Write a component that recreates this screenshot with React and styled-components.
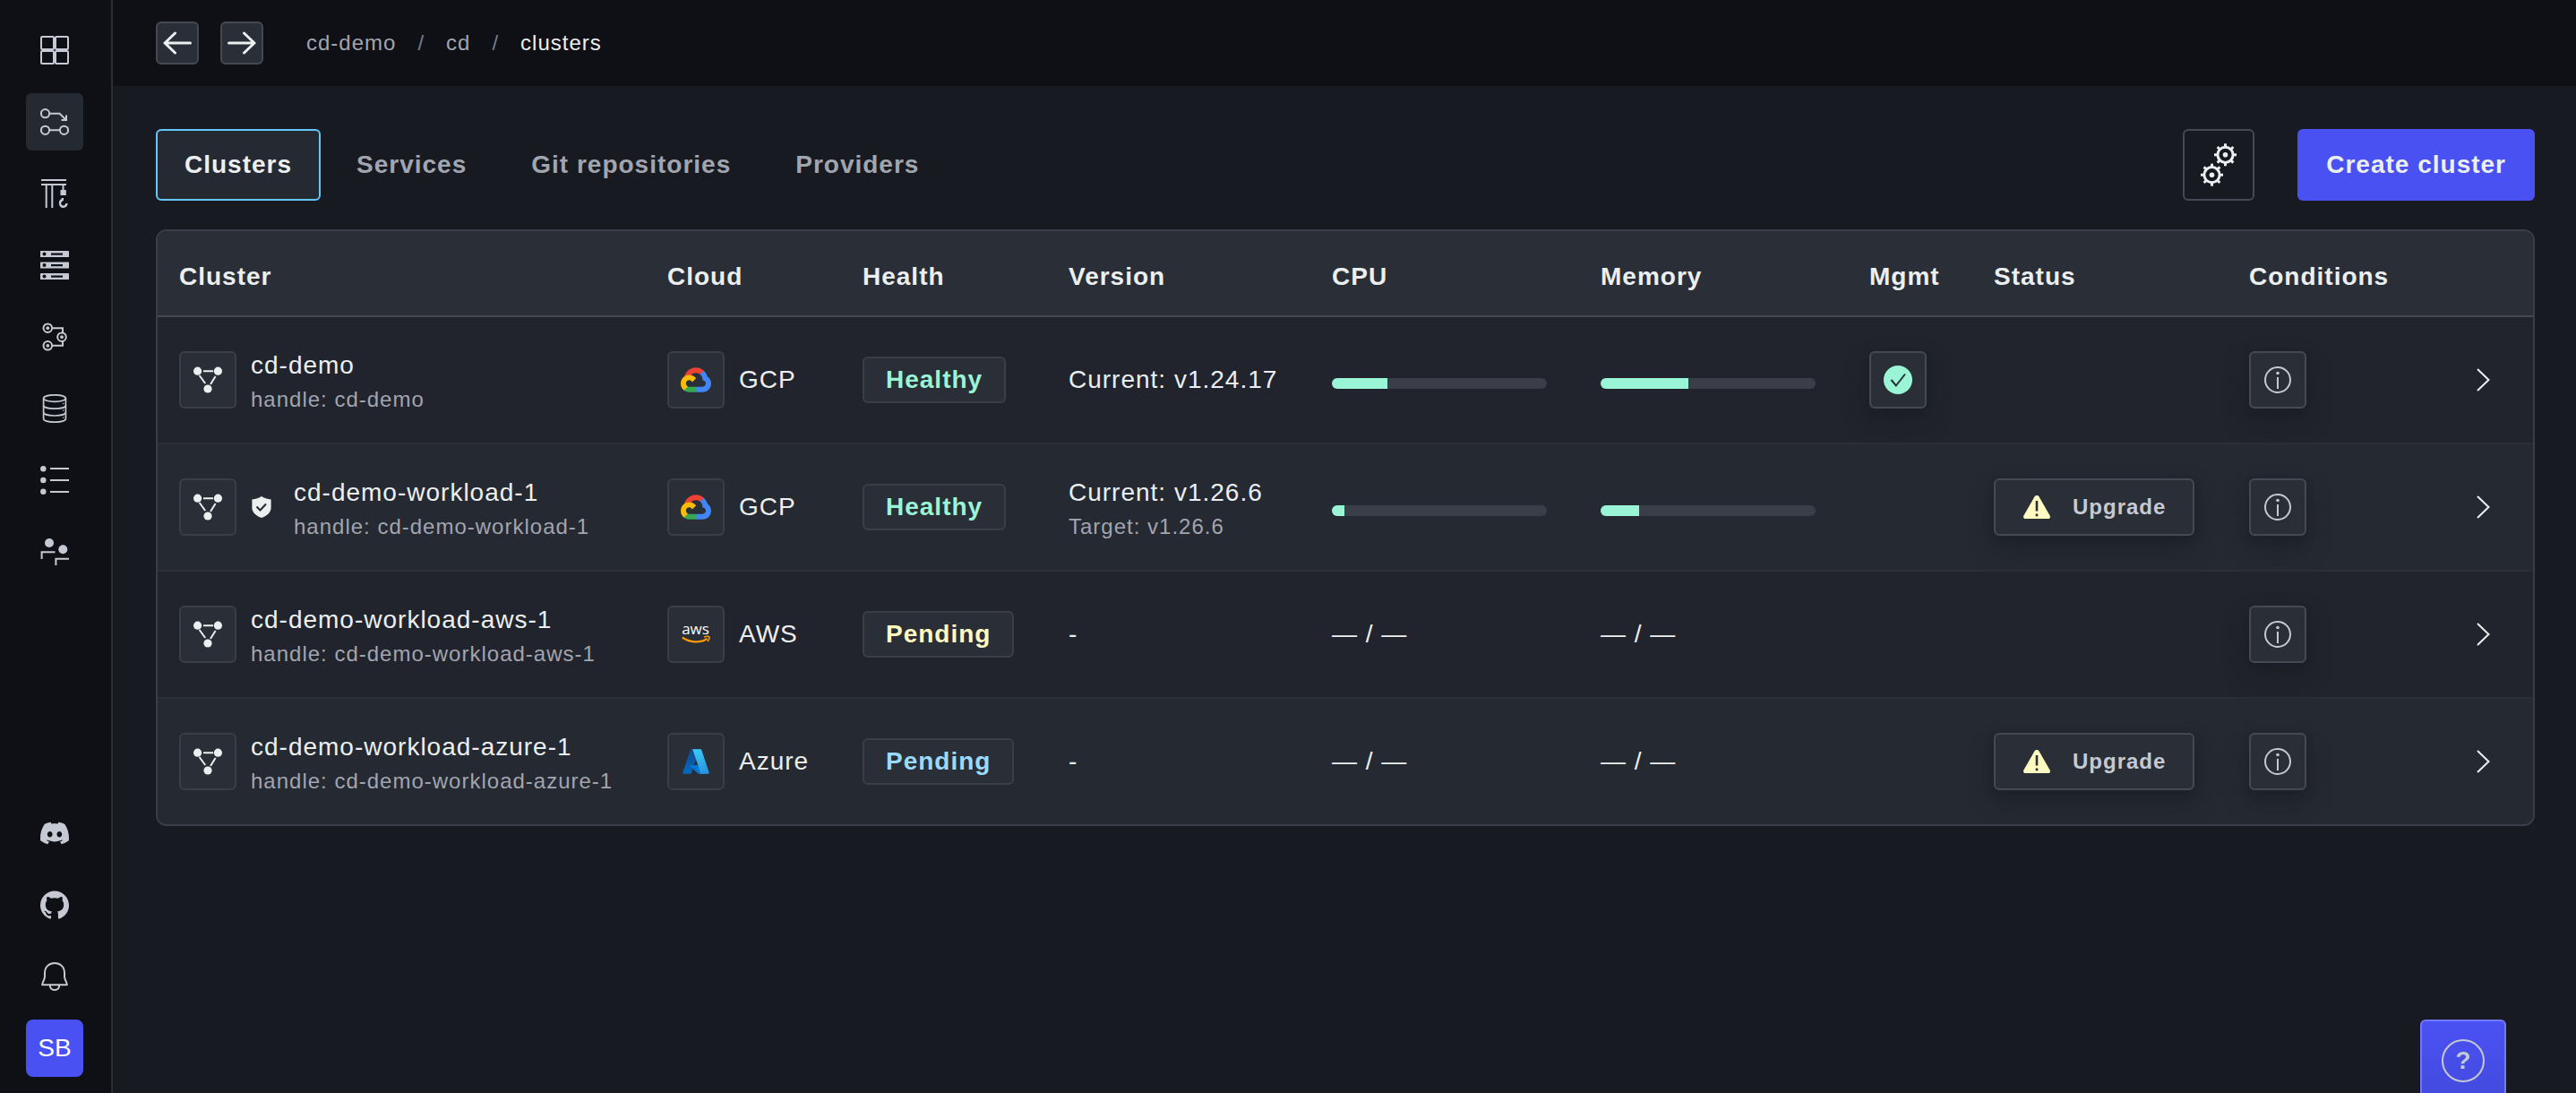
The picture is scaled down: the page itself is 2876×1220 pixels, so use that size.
import React from 'react';
import styled, { createGlobalStyle, css } from 'styled-components';
import { SiDiscord, SiGithub } from 'react-icons/si';

const color = {
  shell: '#0e1015',
  page: '#171a21',
  rowOdd: '#21242c',
  rowEven: '#252932',
  raised: '#2a2e37',
  line: '#2a2e37',
  border: '#3a3e48',
  borderStrong: '#454954',
  text: '#ebeff0',
  textLight: '#c5c9d3',
  textMuted: '#a1a5b0',
  primary: '#4a51f2',
  primaryBorder: '#747af6',
  focus: '#66c7ff',
  success: '#99f5d5',
  warning: '#fff9c2',
  info: '#99daff',
};

const GlobalStyle = createGlobalStyle`
  *, *::before, *::after { box-sizing: border-box; }
  body {
    margin: 0;
    background: ${color.page};
    color: ${color.text};
    font-family: "Liberation Sans", Arial, Helvetica, sans-serif;
    font-size: 28px;
    line-height: 32px;
    letter-spacing: 1px;
  }
  button { font: inherit; letter-spacing: inherit; color: inherit; cursor: pointer; }
  a { color: inherit; text-decoration: none; }
  svg { display: block; flex: none; }
`;

/* ---------- layout ---------- */

const Shell = styled.div`
  display: flex;
  min-height: 100vh;
`;

const Sidebar = styled.nav`
  position: sticky;
  top: 0;
  flex: none;
  display: flex;
  flex-direction: column;
  justify-content: space-between;
  width: 126px;
  height: 100vh;
  padding: 24px 30px 18px 29px;
  background: ${color.shell};
  border-right: 2px solid ${color.raised};
  color: ${color.textLight};
`;

const SideGroup = styled.div`
  display: flex;
  flex-direction: column;
  gap: 16px;
`;

const SideLink = styled.a`
  display: flex;
  align-items: center;
  justify-content: center;
  width: 64px;
  height: 64px;
  border-radius: 6px;
  background: ${(p) => (p.$active ? color.rowEven : 'transparent')};
`;

const Avatar = styled.button`
  width: 64px;
  height: 64px;
  padding: 0;
  border: 0;
  border-radius: 8px;
  background: ${color.primary};
  color: #fff;
  letter-spacing: 0;
`;

const Content = styled.div`
  flex: 1;
  min-width: 0;
`;

const TopBar = styled.header`
  display: flex;
  align-items: center;
  gap: 48px;
  height: 96px;
  padding: 0 48px;
  background: ${color.shell};
`;

const NavButtons = styled.div`
  display: flex;
  gap: 24px;
`;

const floating = css`
  background: ${color.raised};
  border: 2px solid ${color.borderStrong};
  border-radius: 6px;
  box-shadow: 0 4px 8px rgba(23, 26, 33, 0.3), 0 14px 28px rgba(23, 26, 33, 0.4);
`;

const IconButton = styled.button`
  ${floating}
  display: flex;
  align-items: center;
  justify-content: center;
  width: ${(p) => p.$size}px;
  height: ${(p) => p.$size}px;
  padding: 0;
  color: ${(p) => (p.$bright ? color.text : color.textLight)};
  ${(p) => p.$bright && css`box-shadow: none;`}
`;

const Crumbs = styled.ol`
  display: flex;
  gap: 24px;
  margin: 0;
  padding: 0;
  list-style: none;
  font-size: 24px;
  color: ${color.textMuted};

  li + li::before {
    content: '/';
    color: #747b8b;
  }
`;

const Crumb = styled.li`
  display: flex;
  gap: 24px;
  color: ${(p) => (p.$current ? color.text : 'inherit')};
`;

const Main = styled.main`
  display: flex;
  flex-direction: column;
  gap: 32px;
  padding: 48px 46px 48px 48px;
`;

const Toolbar = styled.div`
  display: flex;
  align-items: center;
  justify-content: space-between;
`;

const Tabs = styled.nav`
  display: flex;
  gap: 8px;
`;

const Tab = styled.a`
  display: flex;
  align-items: center;
  height: 80px;
  padding: 0 30px;
  border: 2px solid ${(p) => (p.$active ? color.focus : 'transparent')};
  border-radius: 6px;
  background: ${(p) => (p.$active ? color.rowEven : 'transparent')};
  color: ${(p) => (p.$active ? color.text : color.textMuted)};
  font-weight: 700;
`;

const Actions = styled.div`
  display: flex;
  gap: 48px;
`;

const SettingsButton = styled.button`
  display: flex;
  align-items: center;
  justify-content: center;
  width: 80px;
  height: 80px;
  padding: 0;
  background: transparent;
  border: 2px solid ${color.borderStrong};
  border-radius: 6px;
`;

const PrimaryButton = styled.button`
  height: 80px;
  padding: 0 32px;
  background: ${color.primary};
  border: 0;
  border-radius: 6px;
  && { font-weight: 700; }
`;

/* ---------- table ---------- */

const TableFrame = styled.div`
  overflow: hidden;
  border: 2px solid ${color.border};
  border-radius: 12px;
`;

const Table = styled.table`
  width: 100%;
  table-layout: fixed;
  border-collapse: separate;
  border-spacing: 0;
`;

const Col = styled.col`
  width: ${(p) => (p.$width ? `${p.$width}px` : 'auto')};
`;

const Th = styled.th`
  height: 96px;
  padding: 8px 0 0 24px;
  background: ${color.raised};
  border-bottom: 2px solid ${color.borderStrong};
  text-align: left;
  font-weight: 700;
`;

const Td = styled.td`
  height: 142px;
  padding: 0 0 0 24px;
  vertical-align: middle;
  white-space: nowrap;
  border-bottom: 2px solid ${color.line};
`;

const Row = styled.tr`
  background: ${color.rowOdd};
  &:nth-child(even) { background: ${color.rowEven}; }
  &:last-child ${Td} {
    height: 140px;
    border-bottom: 0;
  }
`;

const Inline = styled.div`
  display: flex;
  align-items: center;
  gap: 16px;
`;

const Tile = styled.span`
  flex: none;
  display: flex;
  align-items: center;
  justify-content: center;
  width: 64px;
  height: 64px;
  background: ${color.raised};
  border: 2px solid ${color.border};
  border-radius: 6px;
`;

const Protected = styled.span`
  width: 32px;
`;

const Stack = styled.div`
  display: flex;
  flex-direction: column;
`;

const Primary = styled.span`
  line-height: 44px;
`;

const Secondary = styled.span`
  font-size: 24px;
  color: ${color.textMuted};
`;

const Chip = styled.span`
  display: inline-flex;
  align-items: center;
  height: 52px;
  padding: 0 24px;
  background: ${color.raised};
  border: 2px solid ${color.border};
  border-radius: 6px;
  color: ${(p) => color[p.$tone]};
  font-weight: 700;
`;

const Meter = styled.div`
  width: 240px;
  height: 12px;
  margin-top: 8px;
  overflow: hidden;
  border-radius: 6px;
  background: ${color.border};
`;

const MeterFill = styled.div`
  height: 100%;
  background: ${color.success};
`;

const UpgradeButton = styled.button`
  ${floating}
  display: flex;
  align-items: center;
  gap: 24px;
  height: 64px;
  padding: 0 30px;
  && {
    font-size: 24px;
    font-weight: 700;
    color: ${color.textLight};
  }
`;

const RowLink = styled.a`
  display: flex;
  justify-content: center;
`;

const HelpButton = styled.button`
  position: fixed;
  right: 78px;
  bottom: 0;
  display: flex;
  justify-content: center;
  width: 96px;
  height: 82px;
  padding: 20px 0 0;
  border: 2px solid ${color.primaryBorder};
  border-bottom: 0;
  border-radius: 6px 6px 0 0;
  background: linear-gradient(#4a51f2, #444bdf);
`;

const HelpMark = styled.span`
  width: 48px;
  height: 48px;
  border: 2px solid ${color.textLight};
  border-radius: 50%;
  color: ${color.textLight};
  font-weight: 700;
  line-height: 44px;
  letter-spacing: 0;
`;

/* ---------- icons ---------- */

const Icon = ({ size = 32, stroke = 2, children }) => (
  <svg
    width={size}
    height={size}
    viewBox={`0 0 ${size} ${size}`}
    fill="none"
    stroke="currentColor"
    strokeWidth={stroke}
    aria-hidden="true"
  >
    {children}
  </svg>
);

const HomeIcon = () => (
  <Icon>
    <rect x="1" y="1" width="14" height="14" rx="1" />
    <rect x="17" y="1" width="14" height="14" rx="1" />
    <rect x="1" y="17" width="14" height="14" rx="1" />
    <rect x="17" y="17" width="14" height="14" rx="1" />
  </Icon>
);

const DeployIcon = () => (
  <Icon>
    <circle cx="5.5" cy="6.7" r="4.6" />
    <circle cx="5.5" cy="25.3" r="4.6" />
    <circle cx="26.5" cy="25.3" r="4.6" />
    <path d="M10 6.7H21.5L29 14M29 8.5V14H23.5M10 25.3H22" />
  </Icon>
);

const CraneIcon = () => (
  <Icon>
    <path d="M1 1H29M1 6H29M6.7 6V32M13.3 6V32M25.5 6V13" />
    <path d="M22.5 12H28.8V18H22.5Z" fill="currentColor" stroke="none" />
    <path d="M24.8 21V23C22.4 23.8 21.8 26 22.2 28C23.2 32 29.2 31.5 29.4 27" strokeWidth="2.4" />
  </Icon>
);

const ServersIcon = () => (
  <Icon>
    {[0, 12.5, 25].map((y) => (
      <g key={y} stroke="none">
        <rect y={y} width="32" height="7" rx="0.5" fill="currentColor" />
        <circle cx="4.5" cy={y + 3.5} r="2" fill={color.shell} />
        <rect x="12" y={y + 2.5} width="13" height="2.2" fill={color.shell} />
      </g>
    ))}
  </Icon>
);

const PipelineIcon = () => (
  <Icon>
    {[[8.3, 6.2], [24, 16.2], [8.3, 25.8]].map(([x, y]) => (
      <g key={y}>
        <circle cx={x} cy={y} r="4.8" />
        <circle cx={x} cy={y} r="1.9" fill="currentColor" stroke="none" />
      </g>
    ))}
    <path d="M13.3 6.2H25V11.5M13.3 25.8H25V21" />
  </Icon>
);

const DatabaseIcon = () => (
  <Icon stroke={1.7}>
    <ellipse cx="16" cy="4.6" rx="12.4" ry="3.8" />
    <path d="M3.6 4.6V27.4C3.6 29.5 9 31.2 16 31.2S28.4 29.5 28.4 27.4V4.6" />
    <path d="M3.6 12.5C3.6 14.6 9 16.2 16 16.2S28.4 14.6 28.4 12.5M3.6 20.2C3.6 22.4 9 24 16 24S28.4 22.4 28.4 20.2" />
    <g fill="currentColor" stroke="none">
      <circle cx="25.6" cy="10.5" r="0.8" />
      <circle cx="25.6" cy="18" r="0.8" />
      <circle cx="25.6" cy="26" r="0.8" />
    </g>
  </Icon>
);

const ListIcon = () => (
  <Icon>
    <path d="M11 3H32M11 16H32M11 29H32" />
    <g fill="currentColor" stroke="none">
      <circle cx="3.3" cy="3.2" r="3.2" />
      <circle cx="3.3" cy="16" r="3.2" />
      <circle cx="3.3" cy="28.8" r="3.2" />
    </g>
  </Icon>
);

const PeopleIcon = () => (
  <Icon>
    <path d="M1.6 24V16.2H16.5M17.4 31V23.8H32" />
    <g fill="currentColor" stroke="none">
      <circle cx="10" cy="6" r="5" />
      <circle cx="25.3" cy="13.3" r="5" />
    </g>
  </Icon>
);

const BellIcon = () => (
  <Icon>
    <path
      d="M2 25.2C1.6 24.6 5 19 5 16V12C5 5 10 1 16 1S27 5 27 12V16C27 19 30.4 24.6 30 25.2Z"
      strokeLinejoin="round"
    />
    <path d="M10.8 25.5C10.8 29 13 31 16 31S21.2 29 21.2 25.5" />
  </Icon>
);

const ArrowLeftIcon = () => (
  <Icon stroke={3}>
    <path d="M30.5 16H2M13.5 5L2 16L13.5 27" strokeLinecap="round" strokeLinejoin="round" />
  </Icon>
);

const ArrowRightIcon = () => (
  <Icon stroke={3}>
    <path d="M1.5 16H30M18.5 5L30 16L18.5 27" strokeLinecap="round" strokeLinejoin="round" />
  </Icon>
);

const Gear = ({ x, y }) => (
  <g transform={`translate(${x} ${y})`}>
    <circle r="8.6" strokeWidth="3" />
    <circle r="2.8" fill="currentColor" stroke="none" />
    {[0, 45, 90, 135, 180, 225, 270, 315].map((angle) => (
      <path key={angle} d="M0 -9V-12.5" strokeWidth="3" transform={`rotate(${angle})`} />
    ))}
  </g>
);

const GearsIcon = () => (
  <Icon size={48}>
    <Gear x={31.5} y={12.8} />
    <Gear x={16.5} y={35.2} />
  </Icon>
);

const ClusterIcon = () => (
  <Icon>
    <path d="M11 6.2H22M6.6 11L13.2 20M24.6 12L19 21" />
    <g fill="currentColor" stroke="none">
      <circle cx="4.6" cy="6.2" r="4.6" />
      <circle cx="27.4" cy="6.2" r="4.6" />
      <circle cx="16" cy="26" r="4.6" />
    </g>
  </Icon>
);

const ShieldIcon = () => (
  <Icon size={24}>
    <path
      d="M12 0C14.5 1.6 18.5 3 22.6 3.4V13C22.6 18 17.5 22 12 24C6.5 22 1.4 18 1.4 13V3.4C5.5 3 9.5 1.6 12 0Z"
      fill="currentColor"
      stroke="none"
    />
    <path d="M6.5 11.5L10.5 15.5L17 8.5" stroke={color.rowEven} />
  </Icon>
);

const CheckIcon = () => (
  <Icon>
    <circle cx="16" cy="16" r="16" fill={color.success} stroke="none" />
    <path d="M8.5 16L13.8 22.5L24 9.5" stroke={color.raised} />
  </Icon>
);

const WarningIcon = () => (
  <Icon>
    <path
      d="M13.6 4.2C14.6 2.5 17.4 2.5 18.4 4.2L30.6 25.5C31.6 27.4 30.6 29 28.6 29H3.4C1.4 29 0.4 27.4 1.4 25.5Z"
      fill={color.warning}
      stroke="none"
    />
    <path d="M16 9V20.5M16 23.5V26.2" stroke={color.raised} strokeWidth="2.6" />
  </Icon>
);

const InfoIcon = () => (
  <Icon>
    <circle cx="16" cy="16" r="14" />
    <circle cx="16" cy="8.5" r="1.8" fill="currentColor" stroke="none" />
    <path d="M16 13V26" />
  </Icon>
);

const ChevronIcon = () => (
  <Icon>
    <path d="M10 4L22.5 16L10 28" />
  </Icon>
);

const GcpLogo = () => (
  <svg width="34" height="28" viewBox="0 0 256 206" aria-hidden="true">
    <path fill="#EA4335" d="M170.25 56.82L192.5 34.57L193.99 25.2C153.44 -11.68 88.98 -7.5 52.42 33.92C42.27 45.42 34.73 59.76 30.72 74.57L38.69 73.45L83.19 66.11L86.63 62.6C106.42 40.85 139.9 37.93 162.76 56.43Z" />
    <path fill="#4285F4" d="M224.2 73.92C219.09 55.08 208.59 38.15 193.99 25.2L162.76 56.43C175.94 67.2 183.46 83.44 183.13 100.47V106.01C198.49 106.01 210.93 118.45 210.93 133.81C210.93 149.16 198.49 161.29 183.13 161.29H127.46L122 167.22V200.56L127.46 205.8H183.13C223.06 206.11 255.69 174.3 256 134.37C256.19 110.17 244.25 87.48 224.2 73.92Z" />
    <path fill="#34A853" d="M71.87 205.8H127.46V161.29H71.87C67.91 161.29 64.07 160.44 60.47 158.79L52.58 161.21L30.18 183.46L28.22 191.04C40.79 200.53 56.12 205.86 71.87 205.8Z" />
    <path fill="#FBBC05" d="M71.87 61.43C31.94 61.66 -0.24 94.23 0 134.16C0.13 156.46 10.55 177.45 28.22 191.04L60.47 158.79C46.48 152.47 40.26 136.01 46.58 122.02C52.9 108.03 69.37 101.81 83.36 108.13C89.52 110.91 94.46 115.85 97.25 122.02L129.49 89.77C115.77 71.83 94.45 61.34 71.87 61.43Z" />
  </svg>
);

const AwsLogo = () => (
  <svg width="36" height="36" viewBox="-2 -3 36 36" role="img" aria-label="aws">
    <text x="15.5" y="15" textAnchor="middle" fontFamily="'Open Sans', sans-serif" fontSize="17" letterSpacing="0" fill="#fff">
      aws
    </text>
    <g fill="none" stroke="#ff9900">
      <path d="M0.8 18.5C9 24.6 21 24.8 28.5 20" strokeWidth="2.2" />
      <path d="M25 18C28 17.2 30 17.2 30.8 17.8C31.3 19 30.5 21.2 29 23" strokeWidth="1.5" />
    </g>
  </svg>
);

const AzureLogo = () => (
  <svg width="32" height="32" viewBox="0 0 96 96" aria-hidden="true">
    <defs>
      <linearGradient id="azureDark" x1="0.6" y1="0" x2="0.3" y2="1">
        <stop offset="0" stopColor="#114a8b" />
        <stop offset="1" stopColor="#0669bc" />
      </linearGradient>
      <linearGradient id="azureLight" x1="0.3" y1="0" x2="0.7" y2="1">
        <stop offset="0" stopColor="#3ccbf4" />
        <stop offset="1" stopColor="#2892df" />
      </linearGradient>
    </defs>
    <path fill="url(#azureDark)" d="M33.338 6.544h26.038l-27.03 80.087a4.152 4.152 0 0 1-3.933 2.824H8.149a4.145 4.145 0 0 1-3.928-5.47L29.404 9.368a4.152 4.152 0 0 1 3.934-2.825z" />
    <path fill="#0078d4" d="M71.175 60.261h-41.29a1.911 1.911 0 0 0-1.305 3.309l26.532 24.764a4.171 4.171 0 0 0 2.846 1.121h23.38z" />
    <path fill="url(#azureLight)" d="M66.595 9.364a4.145 4.145 0 0 0-3.928-2.82H33.648a4.146 4.146 0 0 1 3.928 2.82l25.184 74.62a4.146 4.146 0 0 1-3.928 5.472h29.02a4.146 4.146 0 0 0 3.927-5.472z" />
  </svg>
);

/* ---------- data ---------- */

const sideTop = [
  { label: 'Home', icon: HomeIcon },
  { label: 'Continuous deployment', icon: DeployIcon, active: true },
  { label: 'Builds', icon: CraneIcon },
  { label: 'Nodes', icon: ServersIcon },
  { label: 'Pipelines', icon: PipelineIcon },
  { label: 'Database management', icon: DatabaseIcon },
  { label: 'Audits', icon: ListIcon },
  { label: 'Account', icon: PeopleIcon },
];

const tabs = ['Clusters', 'Services', 'Git repositories', 'Providers'];

const columns = [
  { title: 'Cluster' },
  { title: 'Cloud', width: 218 },
  { title: 'Health', width: 230 },
  { title: 'Version', width: 294 },
  { title: 'CPU', width: 300 },
  { title: 'Memory', width: 300 },
  { title: 'Mgmt', width: 139 },
  { title: 'Status', width: 285 },
  { title: 'Conditions', width: 205 },
  { title: '', width: 136 },
];

const clouds = { GCP: GcpLogo, AWS: AwsLogo, Azure: AzureLogo };

const clusters = [
  { name: 'cd-demo', cloud: 'GCP', health: 'Healthy', tone: 'success', current: 'v1.24.17', cpu: 26, memory: 41, mgmt: true },
  { name: 'cd-demo-workload-1', isProtected: true, cloud: 'GCP', health: 'Healthy', tone: 'success', current: 'v1.26.6', target: 'v1.26.6', cpu: 6, memory: 18, upgrade: true },
  { name: 'cd-demo-workload-aws-1', cloud: 'AWS', health: 'Pending', tone: 'warning' },
  { name: 'cd-demo-workload-azure-1', cloud: 'Azure', health: 'Pending', tone: 'info', upgrade: true },
];

/* ---------- parts ---------- */

const Usage = ({ label, value }) =>
  value === undefined ? (
    '— / —'
  ) : (
    <Meter role="progressbar" aria-label={label} aria-valuenow={value} aria-valuemin={0} aria-valuemax={100}>
      <MeterFill style={{ width: `${value}%` }} />
    </Meter>
  );

const Version = ({ current, target }) => {
  if (!current) return '-';
  if (!target) return `Current: ${current}`;
  return (
    <Stack>
      <Primary>Current: {current}</Primary>
      <Secondary>Target: {target}</Secondary>
    </Stack>
  );
};

const ClusterRow = ({ cluster }) => {
  const Logo = clouds[cluster.cloud];
  return (
    <Row>
      <Td>
        <Inline>
          <Tile><ClusterIcon /></Tile>
          {cluster.isProtected && <Protected><ShieldIcon /></Protected>}
          <Stack>
            <Primary>{cluster.name}</Primary>
            <Secondary>handle: {cluster.name}</Secondary>
          </Stack>
        </Inline>
      </Td>
      <Td>
        <Inline>
          <Tile><Logo /></Tile>
          {cluster.cloud}
        </Inline>
      </Td>
      <Td><Chip $tone={cluster.tone}>{cluster.health}</Chip></Td>
      <Td><Version current={cluster.current} target={cluster.target} /></Td>
      <Td><Usage label="CPU" value={cluster.cpu} /></Td>
      <Td><Usage label="Memory" value={cluster.memory} /></Td>
      <Td>
        {cluster.mgmt && (
          <IconButton type="button" $size={64} aria-label="Management cluster"><CheckIcon /></IconButton>
        )}
      </Td>
      <Td>
        {cluster.upgrade && (
          <UpgradeButton type="button"><WarningIcon />Upgrade</UpgradeButton>
        )}
      </Td>
      <Td>
        <IconButton type="button" $size={64} aria-label="Conditions"><InfoIcon /></IconButton>
      </Td>
      <Td>
        <RowLink href="#details" aria-label={`Open ${cluster.name}`}><ChevronIcon /></RowLink>
      </Td>
    </Row>
  );
};

export default function App() {
  return (
    <>
      <GlobalStyle />
      <Shell>
        <Sidebar aria-label="Main">
          <SideGroup>
            {sideTop.map(({ label, icon: Glyph, active }) => (
              <SideLink key={label} href="#nav" aria-label={label} $active={active}>
                <Glyph />
              </SideLink>
            ))}
          </SideGroup>
          <SideGroup>
            <SideLink href="#discord" aria-label="Discord"><SiDiscord size={32} /></SideLink>
            <SideLink href="#github" aria-label="GitHub"><SiGithub size={32} /></SideLink>
            <SideLink href="#notifications" aria-label="Notifications"><BellIcon /></SideLink>
            <Avatar type="button">SB</Avatar>
          </SideGroup>
        </Sidebar>
        <Content>
          <TopBar>
            <NavButtons>
              <IconButton type="button" $size={48} $bright aria-label="Back"><ArrowLeftIcon /></IconButton>
              <IconButton type="button" $size={48} $bright aria-label="Forward"><ArrowRightIcon /></IconButton>
            </NavButtons>
            <Crumbs>
              <Crumb><a href="#cd-demo">cd-demo</a></Crumb>
              <Crumb><a href="#cd">cd</a></Crumb>
              <Crumb $current aria-current="page">clusters</Crumb>
            </Crumbs>
          </TopBar>
          <Main>
            <Toolbar>
              <Tabs aria-label="Sections">
                {tabs.map((tab, i) => (
                  <Tab key={tab} href="#tab" $active={i === 0}>{tab}</Tab>
                ))}
              </Tabs>
              <Actions>
                <SettingsButton type="button" aria-label="Settings"><GearsIcon /></SettingsButton>
                <PrimaryButton type="button">Create cluster</PrimaryButton>
              </Actions>
            </Toolbar>
            <TableFrame>
              <Table>
                <colgroup>
                  {columns.map((c) => <Col key={c.title} $width={c.width} />)}
                </colgroup>
                <thead>
                  <tr>{columns.map((c) => <Th key={c.title} scope="col">{c.title}</Th>)}</tr>
                </thead>
                <tbody>
                  {clusters.map((c) => <ClusterRow key={c.name} cluster={c} />)}
                </tbody>
              </Table>
            </TableFrame>
          </Main>
        </Content>
      </Shell>
      <HelpButton type="button" aria-label="Help"><HelpMark>?</HelpMark></HelpButton>
    </>
  );
}
